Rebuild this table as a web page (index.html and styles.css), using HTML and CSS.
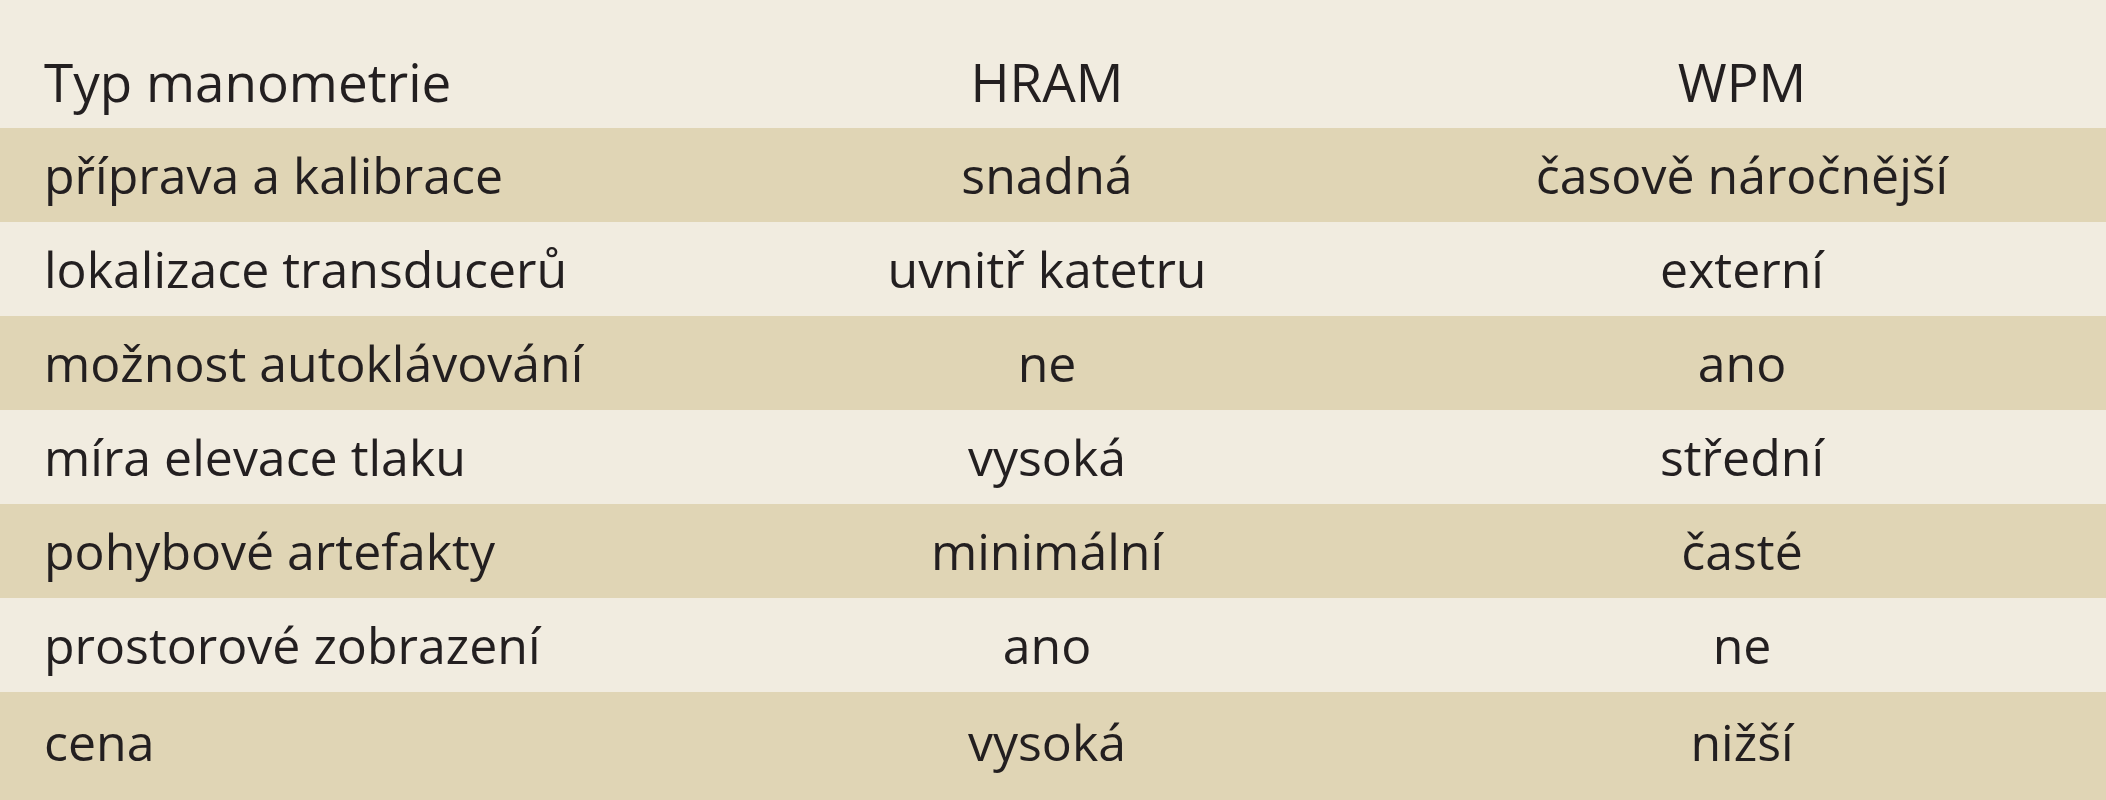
FILE: index.html
```html
<!DOCTYPE html>
<html lang="cs">
<head>
<meta charset="utf-8">
<title>Typ manometrie</title>
<link rel="stylesheet" href="styles.css">
</head>
<body>
<div class="table">
  <div class="row head"><div class="c1">Typ manometrie</div><div class="c2">HRAM</div><div class="c3">WPM</div></div>
  <div class="row band"><div class="c1">příprava a kalibrace</div><div class="c2">snadná</div><div class="c3">časově náročnější</div></div>
  <div class="row"><div class="c1">lokalizace transducerů</div><div class="c2">uvnitř katetru</div><div class="c3">externí</div></div>
  <div class="row band"><div class="c1">možnost autoklávování</div><div class="c2">ne</div><div class="c3">ano</div></div>
  <div class="row"><div class="c1">míra elevace tlaku</div><div class="c2">vysoká</div><div class="c3">střední</div></div>
  <div class="row band"><div class="c1">pohybové artefakty</div><div class="c2">minimální</div><div class="c3">časté</div></div>
  <div class="row"><div class="c1">prostorové zobrazení</div><div class="c2">ano</div><div class="c3">ne</div></div>
  <div class="row band last"><div class="c1">cena</div><div class="c2">vysoká</div><div class="c3">nižší</div></div>
</div>
</body>
</html>
```

FILE: styles.css
```css
html, body {
  margin: 0;
  padding: 0;
  background: #f1ece0;
}
body {
  width: 2106px;
  height: 800px;
  overflow: hidden;
  font-family: "Open Sans", "Liberation Sans", sans-serif;
  font-size: 50px;
  color: #231f20;
}
.table {
  display: flex;
  flex-direction: column;
}
.row {
  display: grid;
  grid-template-columns: 716px 662px 1fr;
  align-items: center;
  height: 94px;
}
.row.head {
  height: 128px;
  align-items: end;
  font-size: 53px;
}
.row.head > div {
  padding-bottom: 10px;
}
.row.band {
  background: #e0d5b5;
}
.row.last {
  height: 110px;
  align-items: start;
}
.row.last > div {
  padding-top: 16px;
}
.c1 {
  padding-left: 44px;
  white-space: nowrap;
}
.c2, .c3 {
  text-align: center;
  white-space: nowrap;
}
```
